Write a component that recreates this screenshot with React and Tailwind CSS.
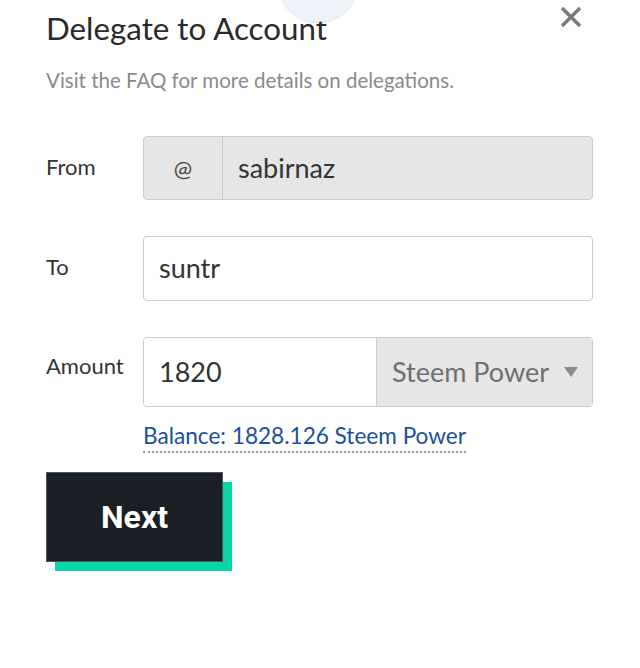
import React from "react";

export default function App() {
  return (
    <div className="relative w-[640px] h-[668px] bg-white overflow-hidden" style={{ fontFamily: "Lato, 'Noto Sans', sans-serif" }}>
      <div className="absolute left-[279px] top-[-56px] w-[78px] h-[78px] rounded-full bg-[#eef2fb] shadow-[0_1px_3px_rgba(0,0,0,0.14)] z-10" />
      <button className="absolute left-[559px] top-[5px] text-[#7a7a7a]">
        <svg width="24" height="24" viewBox="0 0 24 24">
          <path d="M3 3 L21 21 M21 3 L3 21" stroke="#7a7a7a" strokeWidth="3.4" />
        </svg>
      </button>
      <div className="pl-[46px] pr-[47px] pt-[8px]">
        <h1 className="text-[31.3px] leading-[40px] text-[#2a2a2a]">Delegate to Account</h1>
        <p className="mt-[20px] text-[20.5px] leading-[24px] text-[#8a8a8a]">Visit the FAQ for more details on delegations.</p>

        <div className="mt-[44px] flex items-start">
          <div className="w-[97px] pt-[14px] text-[22px] text-[#333]">From</div>
          <div className="flex-1 flex h-[64px] rounded-[4px] border border-[#cacaca] bg-[#e6e6e6]">
            <div className="w-[79px] flex items-center justify-center border-r border-[#cacaca] text-[22px] text-[#444]">@</div>
            <div className="flex-1 flex items-center pl-[15px] text-[27px] text-[#333]">sabirnaz</div>
          </div>
        </div>

        <div className="mt-[36px] flex items-start">
          <div className="w-[97px] pt-[14px] text-[22px] text-[#333]">To</div>
          <div className="flex-1 flex items-center h-[65px] rounded-[4px] border border-[#cacaca] bg-white pl-[15px] text-[27px] text-[#333]">suntr</div>
        </div>

        <div className="mt-[36px] flex items-start">
          <div className="w-[97px] pt-[12px] text-[22px] text-[#333]">Amount</div>
          <div className="flex-1">
            <div className="flex h-[70px] rounded-[4px] border border-[#cacaca]">
              <div className="w-[233px] flex items-center pl-[15px] bg-white border-r border-[#cacaca] text-[27px] text-[#333] rounded-l-[4px]">1820</div>
              <div className="flex-1 flex items-center justify-between pl-[15px] pr-[14px] bg-[#e6e6e6] text-[27px] text-[#6f6f6f]">
                <span>Steem Power</span>
                <svg width="14" height="10" viewBox="0 0 14 10"><path d="M0 0 H14 L7 10 Z" fill="#8a8a8a" /></svg>
              </div>
            </div>
            <div className="mt-[16px]">
              <span className="text-[22.6px] leading-[26px] text-[#1a4f9c] border-b-2 border-dotted border-[#9a9a9a] pb-[2px]">Balance: 1828.126 Steem Power</span>
            </div>
          </div>
        </div>

        <div className="mt-[22px] relative w-[186px] h-[99px]">
          <div className="absolute left-[9px] top-[10px] w-[177px] h-[89px] bg-[#07d7a8]" />
          <button className="absolute left-0 top-0 w-[177px] h-[90px] bg-[#1a1f25] border border-[#555] text-white text-[32px] font-bold" style={{ fontFamily: "Roboto, Inter, sans-serif" }}>Next</button>
        </div>
      </div>
    </div>
  );
}
